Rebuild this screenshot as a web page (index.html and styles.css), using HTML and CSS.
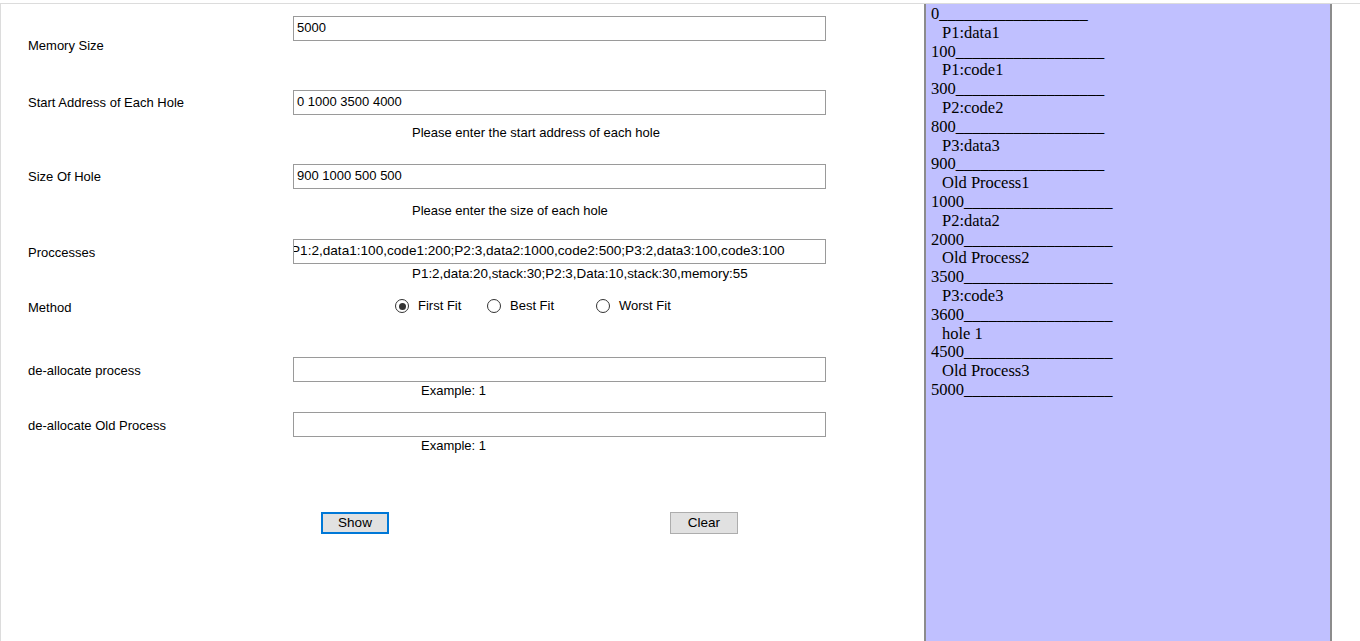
FILE: index.html
```html
<!DOCTYPE html>
<html>
<head>
<meta charset="utf-8">
<title>Memory Allocation</title>
<link rel="stylesheet" href="styles.css">
</head>
<body>
<div class="window">
  <div class="form">
    <div class="row row-1">
      <div class="label">Memory Size</div>
      <div class="field"><div class="textbox"><span>5000</span></div></div>
    </div>
    <div class="row row-2">
      <div class="label">Start Address of Each Hole</div>
      <div class="field">
        <div class="textbox"><span>0 1000 3500 4000</span></div>
        <div class="hint hint-2">Please enter the start address of each hole</div>
      </div>
    </div>
    <div class="row row-3">
      <div class="label">Size Of Hole</div>
      <div class="field">
        <div class="textbox"><span>900 1000 500 500</span></div>
        <div class="hint hint-3">Please enter the size of each hole</div>
      </div>
    </div>
    <div class="row row-4">
      <div class="label">Proccesses</div>
      <div class="field">
        <div class="textbox"><span class="scrolled">P1:2,data1:100,code1:200;P2:3,data2:1000,code2:500;P3:2,data3:100,code3:100</span></div>
        <div class="hint hint-4">P1:2,data:20,stack:30;P2:3,Data:10,stack:30,memory:55</div>
      </div>
    </div>
    <div class="row row-m">
      <div class="label">Method</div>
      <div class="field">
        <div class="radios">
          <div class="radio"><span class="dot checked"></span><span>First Fit</span></div>
          <div class="radio"><span class="dot"></span><span>Best Fit</span></div>
          <div class="radio"><span class="dot"></span><span>Worst Fit</span></div>
        </div>
      </div>
    </div>
    <div class="row row-5">
      <div class="label">de-allocate process</div>
      <div class="field">
        <div class="textbox"></div>
        <div class="hint hint-5">Example: 1</div>
      </div>
    </div>
    <div class="row row-6">
      <div class="label">de-allocate Old Process</div>
      <div class="field">
        <div class="textbox"></div>
        <div class="hint hint-5">Example: 1</div>
      </div>
    </div>
    <div class="buttons">
      <div class="button focused">Show</div>
      <div class="button">Clear</div>
    </div>
  </div>
  <div class="memory">
    <div class="addr">0__________________</div>
    <div class="block">P1:data1</div>
    <div class="addr">100__________________</div>
    <div class="block">P1:code1</div>
    <div class="addr">300__________________</div>
    <div class="block">P2:code2</div>
    <div class="addr">800__________________</div>
    <div class="block">P3:data3</div>
    <div class="addr">900__________________</div>
    <div class="block">Old Process1</div>
    <div class="addr">1000__________________</div>
    <div class="block">P2:data2</div>
    <div class="addr">2000__________________</div>
    <div class="block">Old Process2</div>
    <div class="addr">3500__________________</div>
    <div class="block">P3:code3</div>
    <div class="addr">3600__________________</div>
    <div class="block">hole 1</div>
    <div class="addr">4500__________________</div>
    <div class="block">Old Process3</div>
    <div class="addr">5000__________________</div>
  </div>
</div>
</body>
</html>
```

FILE: styles.css
```css
* { box-sizing: border-box; }

html, body {
  margin: 0;
  padding: 0;
  background: #ffffff;
}

body {
  font-family: "Liberation Sans", Arial, sans-serif;
  font-size: 13px;
  color: #000;
  overflow: hidden;
}

.window {
  margin-top: 3px;
  height: 638px;
  border-top: 1px solid #dcdcdc;
  border-left: 1px solid #dcdcdc;
  display: flex;
  align-items: stretch;
}

.form {
  width: 923px;
  flex: none;
  padding: 12px 0 0 27px;
}

.row {
  display: grid;
  grid-template-columns: 265px 533px;
  align-items: start;
}

.row-1 { height: 74px; }
.row-2 { height: 74px; }
.row-3 { height: 75px; }
.row-4 { height: 55px; }
.row-m { height: 63px; }
.row-5 { height: 55px; }
.row-6 { height: 100px; }

.label {
  line-height: 16px;
  margin-top: 6px;
  white-space: nowrap;
}
.row-1 .label { margin-top: 22px; }
.row-2 .label, .row-3 .label { margin-top: 5px; }

.textbox {
  height: 25px;
  border: 1px solid #9a9a9a;
  background: #fff;
  padding: 0 3px;
  line-height: 22px;
  overflow: hidden;
  white-space: nowrap;
}

.textbox .scrolled {
  display: inline-block;
  margin-left: -6px;
  font-size: 13.6px;
}

.hint {
  line-height: 16px;
  white-space: nowrap;
  margin-left: 119px;
}
.hint-2 { margin-top: 10px; }
.hint-3 { margin-top: 14px; }
.hint-4 { margin-top: 2px; font-size: 13.4px; }
.hint-5 { margin-top: 1px; margin-left: 128px; }

.radios {
  margin-top: 4px;
  margin-left: 102px;
  display: grid;
  grid-template-columns: 92px 109px auto;
  line-height: 16px;
}

.radio {
  display: flex;
  align-items: center;
  gap: 9px;
}

.dot {
  width: 14px;
  height: 14px;
  border: 1px solid #333;
  border-radius: 50%;
  background: #fff;
  position: relative;
  flex: none;
}
.dot.checked::after {
  content: "";
  position: absolute;
  left: 2.5px;
  top: 2.5px;
  width: 7px;
  height: 7px;
  border-radius: 50%;
  background: #333;
}

.buttons {
  display: flex;
  gap: 281px;
  margin-left: 293px;
}

.button {
  width: 68px;
  height: 22px;
  background: #e1e1e1;
  border: 1px solid #adadad;
  text-align: center;
  line-height: 20px;
  font-size: 13.5px;
}
.button.focused {
  border: 2px solid #0078d7;
  line-height: 18px;
}

.memory {
  width: 408px;
  flex: none;
  background: #c0c0ff;
  border-left: 2px solid #8c8c8c;
  border-right: 2px solid #8c8c8c;
  padding: 1px 0 0 5px;
  font-family: "Liberation Serif", "Times New Roman", serif;
  font-size: 16.5px;
  line-height: 18.8px;
}

.memory .addr,
.memory .block {
  white-space: nowrap;
}

.memory .block {
  padding-left: 11px;
}
```
